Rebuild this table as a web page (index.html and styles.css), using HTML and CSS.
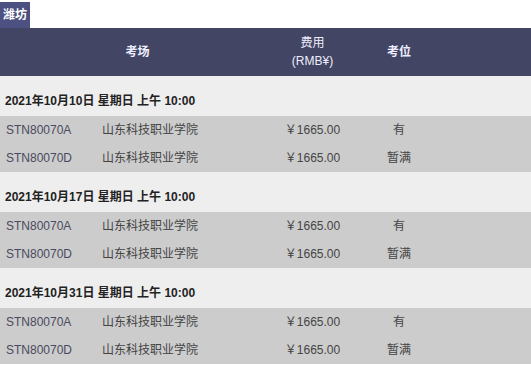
FILE: index.html
```html
<!DOCTYPE html>
<html lang="zh">
<head>
<meta charset="utf-8">
<link rel="stylesheet" href="styles.css">
</head>
<body>
<div class="tab">潍坊</div>
<table class="exam">
  <colgroup>
    <col class="c1"><col class="c2"><col class="c3"><col class="c4"><col class="c5">
  </colgroup>
  <thead>
    <tr>
      <th colspan="2">考场</th>
      <th><span class="thin">费用<br>(RMB¥)</span></th>
      <th>考位</th>
      <th></th>
    </tr>
  </thead>
  <tbody>
    <tr class="group"><td colspan="5">2021年10月10日 星期日 上午 10:00</td></tr>
    <tr class="row"><td class="code">STN80070A</td><td class="place">山东科技职业学院</td><td class="price">￥1665.00</td><td class="seat">有</td><td></td></tr>
    <tr class="row"><td class="code">STN80070D</td><td class="place">山东科技职业学院</td><td class="price">￥1665.00</td><td class="seat">暂满</td><td></td></tr>
    <tr class="group"><td colspan="5">2021年10月17日 星期日 上午 10:00</td></tr>
    <tr class="row"><td class="code">STN80070A</td><td class="place">山东科技职业学院</td><td class="price">￥1665.00</td><td class="seat">有</td><td></td></tr>
    <tr class="row"><td class="code">STN80070D</td><td class="place">山东科技职业学院</td><td class="price">￥1665.00</td><td class="seat">暂满</td><td></td></tr>
    <tr class="group"><td colspan="5">2021年10月31日 星期日 上午 10:00</td></tr>
    <tr class="row"><td class="code">STN80070A</td><td class="place">山东科技职业学院</td><td class="price">￥1665.00</td><td class="seat">有</td><td></td></tr>
    <tr class="row"><td class="code">STN80070D</td><td class="place">山东科技职业学院</td><td class="price">￥1665.00</td><td class="seat">暂满</td><td></td></tr>
  </tbody>
</table>
</body>
</html>
```
FILE: styles.css
```css
html, body {
  margin: 0;
  padding: 0;
  background: #ffffff;
}
body {
  font-family: "Liberation Sans", "Noto Sans CJK SC", sans-serif;
  font-size: 12px;
  color: #444;
}
.tab {
  display: inline-block;
  margin-top: 2px;
  height: 26px;
  line-height: 26px;
  padding: 0 3px 0 3px;
  background: #4c5181;
  color: #ffffff;
  font-weight: bold;
  font-size: 12px;
  vertical-align: top;
}
.exam {
  display: table;
  width: 531px;
  border-collapse: collapse;
  table-layout: fixed;
}
.c1 { width: 96px; }
.c2 { width: 179px; }
.c3 { width: 75px; }
.c4 { width: 98px; }
.c5 { width: 83px; }
.exam th {
  background: #424563;
  color: #eeeeff;
  height: 48px;
  padding: 0;
  font-size: 12px;
  font-weight: bold;
  line-height: 18px;
  text-align: center;
  vertical-align: middle;
}
.exam th .thin {
  font-weight: normal;
}
.exam td {
  padding: 0;
}
.group td {
  background: #eeeeee;
  height: 40px;
  box-sizing: border-box;
  padding: 15px 5px 5px;
  line-height: 20px;
  font-weight: bold;
  color: #222222;
}
.row td {
  background: #cccccc;
  height: 28px;
  line-height: 28px;
  color: #444444;
}
.row .code {
  padding-left: 6px;
  color: #4a4a60;
}
.row .place {
  padding-left: 6px;
}
.row .price {
  text-align: center;
}
.row .seat {
  text-align: center;
}
```
